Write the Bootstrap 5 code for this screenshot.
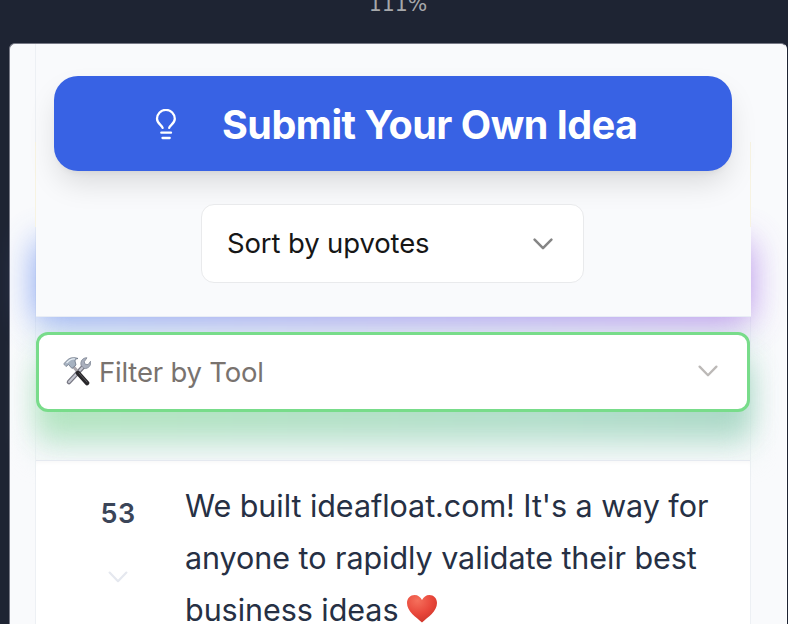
<!DOCTYPE html>
<html lang="en">
<head>
<meta charset="utf-8">
<meta name="viewport" content="width=device-width, initial-scale=1">
<title>Ideas</title>
<link href="https://cdn.jsdelivr.net/npm/bootstrap@5.3.0/dist/css/bootstrap.min.css" rel="stylesheet">
<style>
body { background: #1e2433; font-family: Inter, "Liberation Sans", sans-serif; height: 624px; overflow: hidden; }
.zoom-label { height: 43px; padding-left: 8px; font: 20.5px/24px "DejaVu Sans", sans-serif; color: #a6a8ab; }
.zoom-label span { margin-top: -8px; }
.sheet { margin: 0 1px 0 9px; height: 581px; background: #f9fafc; border: 1px solid #777986; border-bottom: 0; border-right-color: #fff; border-radius: 6px 6px 0 0; padding: 0 36px 0 25px; }
.feed { height: 580px; width: 716px; border: solid #edf0f4; border-width: 0 1px; isolation: isolate; }
.controls { height: 273px; margin: 0 -1px; padding: 32px 18px 0 19px; }
.controls-bg { inset: 0 0 0 1px; background: #f9fafc; border-bottom: 1px solid #e9edf5; z-index: -1; }
.edge-tint { top: 98px; bottom: 90px; left: 0; right: 0; border: solid #f7f3e2; border-width: 0 1px; z-index: -1; }
.glow-blue { left: 0; right: 0; top: 198px; height: 80px; background: linear-gradient(90deg, #6f93ef, #a878e6); filter: blur(17px); opacity: .82; z-index: -2; }
.glow-green { left: 2px; right: 0; top: 31px; height: 72px; border-radius: 12px; background: linear-gradient(90deg, #a9e3b6, #a7dac2 70%, #9fd3be); filter: blur(14px); opacity: .82; z-index: -2; }
.glow-soft { left: 0; right: 0; top: 0; height: 120px; background: #dceee9; filter: blur(14px); z-index: -3; }
.submit-btn { height: 95px; width: 678px; padding: 0 0 0 101px; background: #3862e4; color: #fff; border: 0; border-radius: 24px; box-shadow: 0 15px 30px -4px #00000022, 0 5px 9px -6px #0000001c; font-size: 39.5px; font-weight: 650; letter-spacing: -.5px; white-space: nowrap; }
.submit-btn:hover { background: #3862e4; color: #fff; }
.submit-btn svg { margin-top: 2px; }
.submit-btn span { margin: 4px 0 0 45px; }
.sort-box { width: 383px; height: 79px; margin: 33px 0 0 147px; padding: 1px 30px 0 25px; background: #fff; border: 1px solid #e9eaec; border-radius: 13px; color: #161616; font-size: 27.5px; letter-spacing: -.13px; }
.filter-wrap { margin: 15px -1px 0 0; }
.filter-box { width: 714px; height: 80px; padding: 0 29px 2px 24px; background: #fff; border: 3px solid #78dc8a; border-radius: 12px; color: #79736f; font-size: 27.5px; letter-spacing: -.2px; }
.filter-box span { margin: 4px 0 0 8px; }
.idea { margin-top: 48px; height: 180px; background: #fff; border-top: 1px solid #e5e9f0; box-shadow: inset 0 4px 5px -3px #0000000a; padding: 19px 0 0; }
.votes { width: 163px; padding-top: 16px; font-size: 27px; line-height: 36px; font-weight: 600; letter-spacing: .4px; color: #3b4558; }
.votes span { padding-left: 1px; }
.votes svg { margin-top: 39px; }
.idea-text { width: 560px; margin-left: -14px; color: #263044; font-size: 30.5px; line-height: 52px; letter-spacing: -.05px; white-space: nowrap; }
.idea-text svg { margin-left: 8px; margin-top: -4px; }
</style>
<script src="https://cdn.jsdelivr.net/npm/bootstrap@5.3.0/dist/js/bootstrap.bundle.min.js"></script>
</head>
<body>
<header class="zoom-label d-flex justify-content-center"><span>111%</span></header>
<main class="sheet">
  <div class="feed">
    <section class="controls position-relative">
      <div class="controls-bg position-absolute"></div>
      <div class="edge-tint position-absolute"></div>
      <div class="glow-blue position-absolute"></div>
      <button class="submit-btn btn d-flex align-items-center">
        <svg width="22" height="32" viewBox="0 0 22 32" fill="none" stroke="#fff" stroke-width="2.300" stroke-linecap="round"><path d="M7.600 18.800C7.200 16 2 14.800 2 9.800a8.900 8.900 0 0 1 17.800 0c0 5-5.200 6.200-5.600 9M6.300 23.700h9.700M7.500 29h7.200"/></svg>
        <span>Submit Your Own Idea</span>
      </button>
      <div class="sort-box d-flex align-items-center justify-content-between">
        <span class="text-nowrap">Sort by upvotes</span>
        <svg width="20" height="12" viewBox="0 0 20 12" fill="none" stroke="#858585" stroke-width="2.500" stroke-linecap="round" stroke-linejoin="round"><path d="M1.600 1.600 10 10.200l8.400-8.600"/></svg>
      </div>
    </section>
    <section class="filter-wrap position-relative">
      <div class="glow-soft position-absolute"></div>
      <div class="glow-green position-absolute"></div>
      <div class="filter-box d-flex align-items-center">
        <svg width="28" height="30" viewBox="0 0 28 30" fill="none" stroke-linecap="round">
          <path d="M20 11 6 26" stroke="#777783" stroke-width="4.600"/>
          <path d="M20 11 6 26" stroke="#c6c8d2" stroke-width="2"/>
          <path d="M18 9c-1-4 2-7.500 6-7.200l-2.800 4 1 2.500 3 .3 2.300-3.300c1 4-2 7.600-6 7.300z" fill="#a9afbd" stroke="#7d8593" stroke-width=".8"/>
          <path d="m9 9 6 7" stroke="#aaa7ad" stroke-width="3"/>
          <path d="m15 17 9 10" stroke="#29272a" stroke-width="4.600"/>
          <path d="m16 17 8 9" stroke="#5b5a60" stroke-width="1"/>
          <path d="M1 7.500 4.500 4C7 1.500 11 1 15 2.500c-2 .3-3 1-3 2.500l1 4-4 3.500-3.500-4-2.200 1.800z" fill="#a6b2c1" stroke="#697484" stroke-width=".8"/>
          <path d="m4 6.500 3-2.500c1.500-1 3-1.300 4.500-1.200" stroke="#e8eef4" stroke-width="1.300"/>
        </svg>
        <span class="text-nowrap">Filter by Tool</span>
        <svg class="ms-auto" width="20" height="12" viewBox="0 0 20 12" fill="none" stroke="#bcb9b7" stroke-width="2.300" stroke-linecap="round" stroke-linejoin="round"><path d="M1.600 1.600 10 10.200l8.400-8.600"/></svg>
      </div>
    </section>
    <article class="idea d-flex">
      <div class="votes d-flex flex-column align-items-center">
        <span>53</span>
        <svg width="20" height="12" viewBox="0 0 20 12" fill="none" stroke="#e5e8ef" stroke-width="2.200" stroke-linecap="round" stroke-linejoin="round"><path d="M1.600 1.600 10 10.200l8.400-8.600"/></svg>
      </div>
      <div class="idea-text">
        <div>We built ideafloat.com! It's a way for</div>
        <div>anyone to rapidly validate their best</div>
        <div class="d-flex align-items-center"><span>business ideas</span>
          <svg width="32" height="29" viewBox="0 0 32 29"><defs><radialGradient id="heart" cx=".35" cy=".2" r=".9"><stop offset="0" stop-color="#f5705c"/><stop offset=".55" stop-color="#e8463a"/><stop offset="1" stop-color="#c93227"/></radialGradient></defs><path fill="url(#heart)" d="M16 28.500C10 23 1 17.500 1 9 1 4 4.500 1 8.500 1c3.500 0 6 2 7.500 5 1.500-3 4-5 7.500-5C27.500 1 31 4 31 9c0 8.500-9 14-15 19.500z"/></svg>
        </div>
      </div>
    </article>
  </div>
</main>
</body>
</html>
